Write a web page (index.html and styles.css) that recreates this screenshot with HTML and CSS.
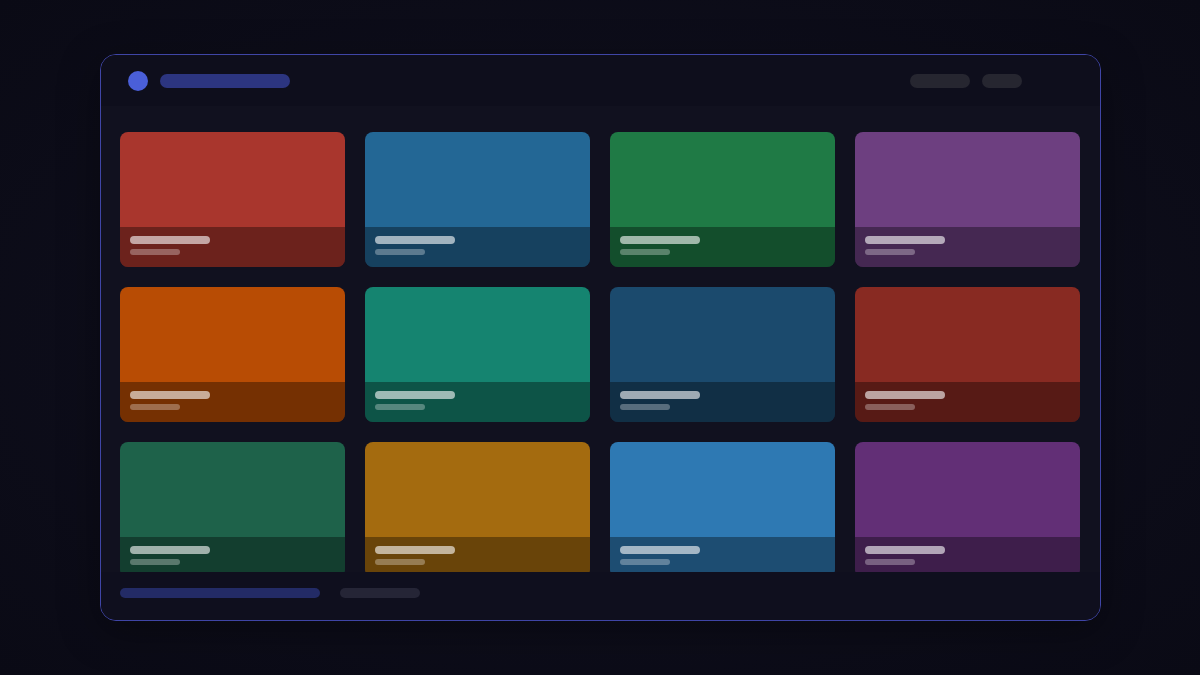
FILE: index.html
```html
<!DOCTYPE html>
<html lang="en">
<head>
<meta charset="utf-8">
<title>Gallery</title>
<link rel="stylesheet" href="styles.css">
</head>
<body>
<div class="stage">
  <div class="window">
    <header class="topbar">
      <div class="brand">
        <span class="brand-dot"></span>
        <span class="bar bar-title"></span>
      </div>
      <div class="actions">
        <span class="bar bar-action wide"></span>
        <span class="bar bar-action"></span>
      </div>
    </header>
    <main class="content">
      <div class="grid">
        <div class="card c1"><div class="card-art"></div><div class="card-meta"><span class="line l1"></span><span class="line l2"></span></div></div>
        <div class="card c2"><div class="card-art"></div><div class="card-meta"><span class="line l1"></span><span class="line l2"></span></div></div>
        <div class="card c3"><div class="card-art"></div><div class="card-meta"><span class="line l1"></span><span class="line l2"></span></div></div>
        <div class="card c4"><div class="card-art"></div><div class="card-meta"><span class="line l1"></span><span class="line l2"></span></div></div>
        <div class="card c5"><div class="card-art"></div><div class="card-meta"><span class="line l1"></span><span class="line l2"></span></div></div>
        <div class="card c6"><div class="card-art"></div><div class="card-meta"><span class="line l1"></span><span class="line l2"></span></div></div>
        <div class="card c7"><div class="card-art"></div><div class="card-meta"><span class="line l1"></span><span class="line l2"></span></div></div>
        <div class="card c8"><div class="card-art"></div><div class="card-meta"><span class="line l1"></span><span class="line l2"></span></div></div>
        <div class="card c9"><div class="card-art"></div><div class="card-meta"><span class="line l1"></span><span class="line l2"></span></div></div>
        <div class="card c10"><div class="card-art"></div><div class="card-meta"><span class="line l1"></span><span class="line l2"></span></div></div>
        <div class="card c11"><div class="card-art"></div><div class="card-meta"><span class="line l1"></span><span class="line l2"></span></div></div>
        <div class="card c12"><div class="card-art"></div><div class="card-meta"><span class="line l1"></span><span class="line l2"></span></div></div>
      </div>
    </main>
    <footer class="bottombar">
      <span class="bar bar-progress"></span>
      <span class="bar bar-status"></span>
    </footer>
  </div>
</div>
</body>
</html>
```

FILE: styles.css
```css
* { box-sizing: border-box; }

html, body {
  margin: 0;
  height: 100%;
}

body {
  background: radial-gradient(ellipse at 50% 50%, #11111f 0%, #0d0d1a 55%, #0a0a15 100%);
  font-family: "Inter", "Liberation Sans", sans-serif;
}

.stage {
  width: 1200px;
  height: 675px;
  display: flex;
  justify-content: center;
  padding-top: 54px;
}

.window {
  width: 1001px;
  height: 567px;
  border: 1px solid #3f45a6;
  border-radius: 16px;
  background: #11111f;
  display: flex;
  flex-direction: column;
  overflow: hidden;
  box-shadow: 0 10px 40px rgba(0, 0, 0, 0.35);
}

.topbar {
  flex: 0 0 51px;
  background: #0e0e1c;
  display: flex;
  align-items: center;
  justify-content: space-between;
  padding: 0 78px 0 27px;
}

.brand {
  display: flex;
  align-items: center;
  gap: 12px;
}

.brand-dot {
  width: 20px;
  height: 20px;
  border-radius: 50%;
  background: #4a5fd9;
}

.bar {
  display: block;
  border-radius: 7px;
}

.bar-title {
  width: 130px;
  height: 14px;
  background: #2c3580;
}

.actions {
  display: flex;
  gap: 12px;
}

.bar-action {
  width: 40px;
  height: 14px;
  background: #262630;
}

.bar-action.wide { width: 60px; }

.content {
  flex: 1 1 auto;
  overflow: hidden;
  padding: 26px 19px 0 19px;
}

.grid {
  display: grid;
  grid-template-columns: repeat(4, 225px);
  grid-auto-rows: 135px;
  column-gap: 20px;
  row-gap: 20px;
}

.card {
  border-radius: 8px;
  overflow: hidden;
  display: flex;
  flex-direction: column;
}

.card-art { flex: 0 0 95px; }

.card-meta {
  flex: 1 1 auto;
  background: rgba(0, 0, 0, 0.36);
  padding: 9px 10px 0;
  display: flex;
  flex-direction: column;
  gap: 5px;
}

.line {
  display: block;
  border-radius: 4px;
}

.l1 {
  width: 80px;
  height: 8px;
  background: rgba(255, 255, 255, 0.6);
}

.l2 {
  width: 50px;
  height: 6px;
  background: rgba(255, 255, 255, 0.3);
}

.c1 { background: #a9362d; }
.c2 { background: #236795; }
.c3 { background: #1f7a45; }
.c4 { background: #6d3f80; }
.c5 { background: #b84c04; }
.c6 { background: #158470; }
.c7 { background: #1b4a6d; }
.c8 { background: #882a22; }
.c9 { background: #1e624a; }
.c10 { background: #a46b0f; }
.c11 { background: #2e79b3; }
.c12 { background: #622f76; }

.bottombar {
  flex: 0 0 48px;
  background: #0f0f1e;
  display: flex;
  align-items: flex-start;
  gap: 20px;
  padding: 16px 19px 0;
}

.bar-progress {
  width: 200px;
  height: 10px;
  border-radius: 5px;
  background: #232b66;
}

.bar-status {
  width: 80px;
  height: 10px;
  border-radius: 5px;
  background: #252536;
}
```
